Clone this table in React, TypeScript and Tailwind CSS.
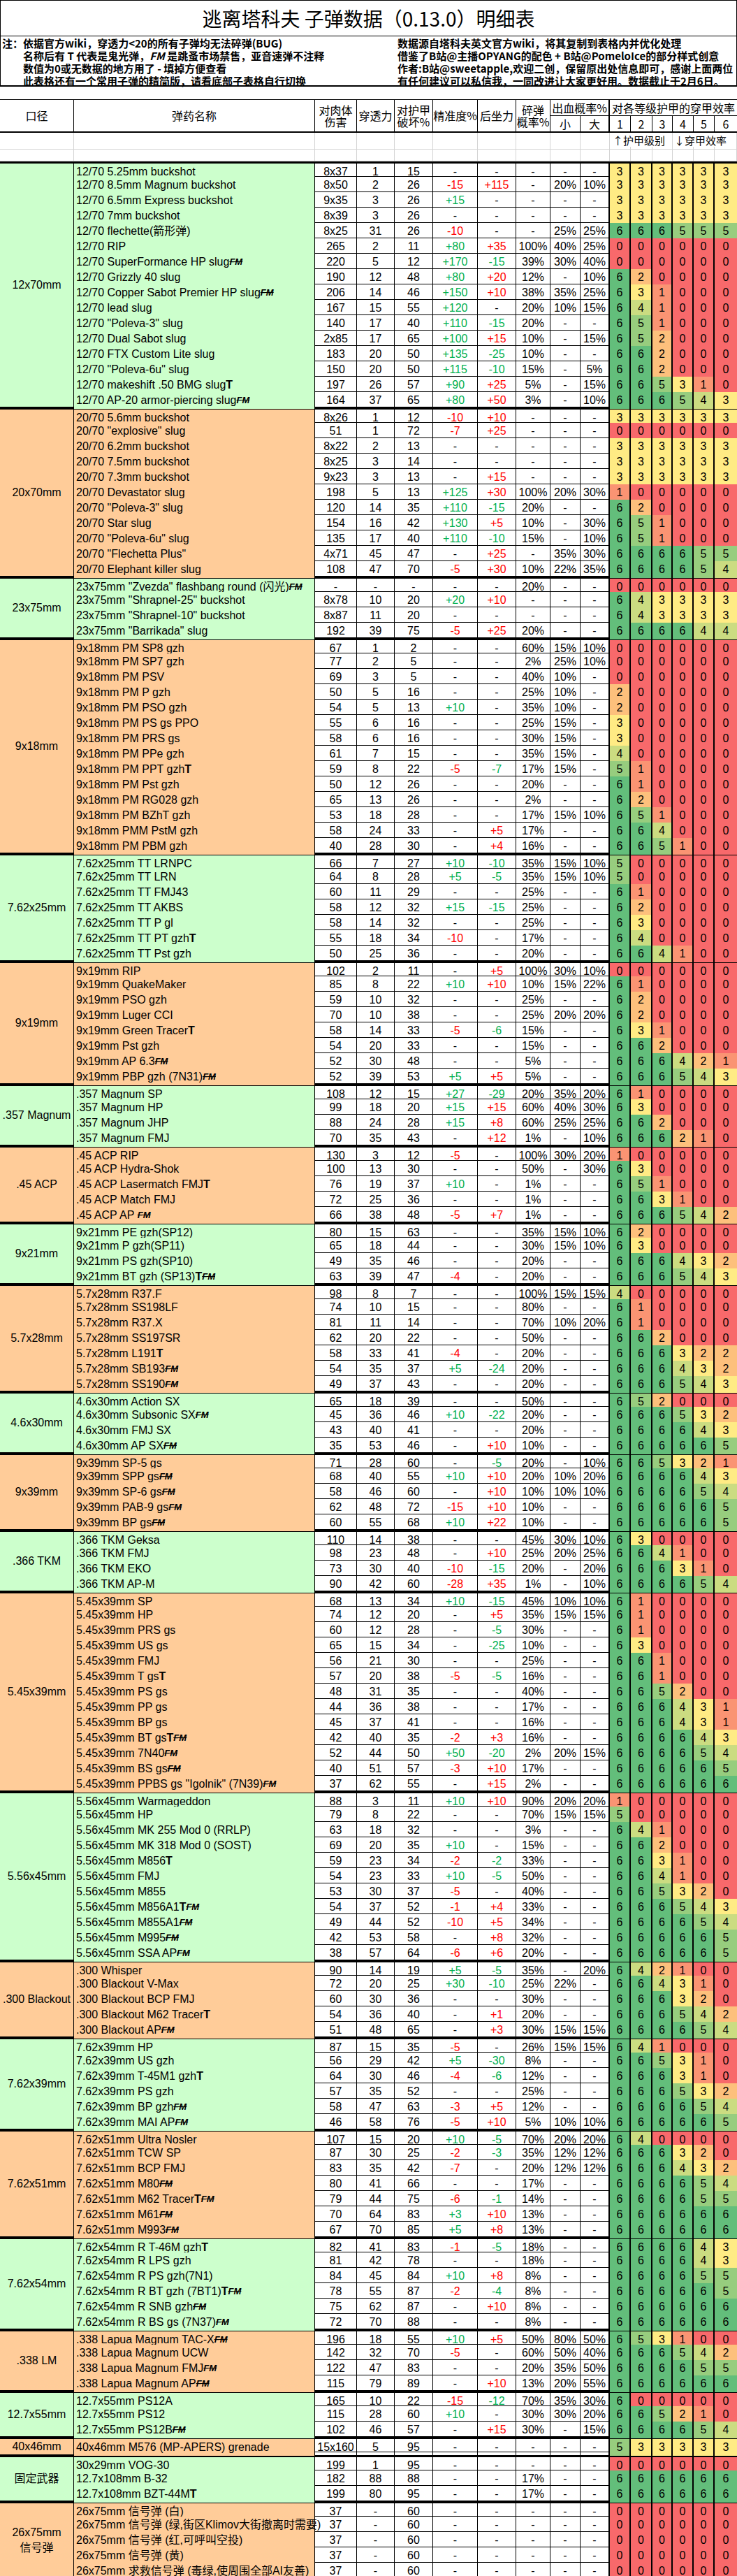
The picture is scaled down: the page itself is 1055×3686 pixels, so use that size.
import React from 'react';

type Group = { cal: string[]; tone: 'g' | 'o'; rows: string[] };

const ROW_COLS =
	'grid grid-cols-[345px_60px_54px_55px_64px_55px_49px_43px_42px_30px_31px_29px_30px_30px_32px]';
const ALL_COLS =
	'grid grid-cols-[106px_345px_60px_54px_55px_64px_55px_49px_43px_42px_30px_31px_29px_30px_30px_32px]';

const TONE = { g: 'bg-[#CCFFCC]', o: 'bg-[#FFCC99]' };

// 0..6 on Excel's red-yellow-green colour scale
const PEN: Record<string, string> = {
	'0': 'bg-[#F8696B]',
	'1': 'bg-[#FA9473]',
	'2': 'bg-[#FDC07C]',
	'3': 'bg-[#FFEB84]',
	'4': 'bg-[#CBDC81]',
	'5': 'bg-[#97CD7E]',
	'6': 'bg-[#63BE7B]'
};

// name|damage|pen|armor%|accuracy|recoil|frag|bleed small|bleed large|armor class 1-6
const groups: Group[] = [
	{
		cal: ['12x70mm'],
		tone: 'g',
		rows: [
			'12/70 5.25mm buckshot|8x37|1|15|-|-|-|-|-|333333',
			'12/70 8.5mm Magnum buckshot|8x50|2|26|-15|+115|-|20%|10%|333333',
			'12/70 6.5mm Express buckshot|9x35|3|26|+15|-|-|-|-|333333',
			'12/70 7mm buckshot|8x39|3|26|-|-|-|-|-|333333',
			'12/70 flechette(箭形弹)|8x25|31|26|-10|-|-|25%|25%|666555',
			'12/70 RIP|265|2|11|+80|+35|100%|40%|25%|000000',
			'12/70 SuperFormance HP slug {FM}|220|5|12|+170|-15|39%|30%|40%|000000',
			'12/70 Grizzly 40 slug|190|12|48|+80|+20|12%|-|10%|620000',
			'12/70 Copper Sabot Premier HP slug {FM}|206|14|46|+150|+10|38%|35%|25%|631000',
			'12/70 lead slug|167|15|55|+120|-|20%|10%|15%|641000',
			'12/70 "Poleva-3" slug|140|17|40|+110|-15|20%|-|-|651000',
			'12/70 Dual Sabot slug|2x85|17|65|+100|+15|10%|-|15%|652000',
			'12/70 FTX Custom Lite slug|183|20|50|+135|-25|10%|-|-|662000',
			'12/70 "Poleva-6u" slug|150|20|50|+115|-10|15%|-|5%|662000',
			'12/70 makeshift .50 BMG slug {T}|197|26|57|+90|+25|5%|-|15%|665310',
			'12/70 AP-20 armor-piercing slug {FM}|164|37|65|+80|+50|3%|-|10%|666543'
		]
	},
	{
		cal: ['20x70mm'],
		tone: 'o',
		rows: [
			'20/70 5.6mm buckshot|8x26|1|12|-10|+10|-|-|-|333333',
			'20/70 "explosive" slug|51|1|72|-7|+25|-|-|-|000000',
			'20/70 6.2mm buckshot|8x22|2|13|-|-|-|-|-|333333',
			'20/70 7.5mm buckshot|8x25|3|14|-|-|-|-|-|333333',
			'20/70 7.3mm buckshot|9x23|3|13|-|+15|-|-|-|333333',
			'20/70 Devastator slug|198|5|13|+125|+30|100%|20%|30%|100000',
			'20/70 "Poleva-3" slug|120|14|35|+110|-15|20%|-|-|620000',
			'20/70 Star slug|154|16|42|+130|+5|10%|-|30%|651000',
			'20/70 "Poleva-6u" slug|135|17|40|+110|-10|15%|-|10%|651000',
			'20/70 "Flechetta Plus"|4x71|45|47|-|+25|-|35%|30%|666655',
			'20/70 Elephant killer slug|108|47|70|-5|+30|10%|22%|35%|666654'
		]
	},
	{
		cal: ['23x75mm'],
		tone: 'g',
		rows: [
			'23x75mm "Zvezda" flashbang round (闪光){FM}|-|-|-|-|-|20%|-|-|000000',
			'23x75mm "Shrapnel-25" buckshot|8x78|10|20|+20|+10|-|-|-|643333',
			'23x75mm "Shrapnel-10" buckshot|8x87|11|20|-|-|-|-|-|643333',
			'23x75mm "Barrikada" slug|192|39|75|-5|+25|20%|-|-|666644'
		]
	},
	{
		cal: ['9x18mm'],
		tone: 'o',
		rows: [
			'9x18mm PM SP8 gzh|67|1|2|-|-|60%|15%|10%|000000',
			'9x18mm PM SP7 gzh|77|2|5|-|-|2%|25%|10%|000000',
			'9x18mm PM PSV|69|3|5|-|-|40%|10%|-|000000',
			'9x18mm PM P gzh|50|5|16|-|-|25%|10%|-|200000',
			'9x18mm PM PSO gzh|54|5|13|+10|-|35%|10%|-|200000',
			'9x18mm PM PS gs PPO|55|6|16|-|-|25%|15%|-|300000',
			'9x18mm PM PRS gs|58|6|16|-|-|30%|15%|-|300000',
			'9x18mm PM PPe gzh|61|7|15|-|-|35%|15%|-|400000',
			'9x18mm PM PPT gzh {T}|59|8|22|-5|-7|17%|15%|-|510000',
			'9x18mm PM Pst gzh|50|12|26|-|-|20%|-|-|610000',
			'9x18mm PM RG028 gzh|65|13|26|-|-|2%|-|-|620000',
			'9x18mm PM BZhT gzh|53|18|28|-|-|17%|15%|10%|651000',
			'9x18mm PMM PstM gzh|58|24|33|-|+5|17%|-|-|664000',
			'9x18mm PM PBM gzh|40|28|30|-|+4|16%|-|-|665100'
		]
	},
	{
		cal: ['7.62x25mm'],
		tone: 'g',
		rows: [
			'7.62x25mm TT LRNPC|66|7|27|+10|-10|35%|15%|10%|500000',
			'7.62x25mm TT LRN|64|8|28|+5|-5|35%|15%|10%|500000',
			'7.62x25mm TT FMJ43|60|11|29|-|-|25%|-|-|610000',
			'7.62x25mm TT AKBS|58|12|32|+15|-15|25%|-|-|620000',
			'7.62x25mm TT P gl|58|14|32|-|-|25%|-|-|630000',
			'7.62x25mm TT PT gzh {T}|55|18|34|-10|-|17%|-|-|640000',
			'7.62x25mm TT Pst gzh|50|25|36|-|-|20%|-|-|664100'
		]
	},
	{
		cal: ['9x19mm'],
		tone: 'o',
		rows: [
			'9x19mm RIP|102|2|11|-|+5|100%|30%|10%|000000',
			'9x19mm QuakeMaker|85|8|22|+10|+10|10%|15%|22%|610000',
			'9x19mm PSO gzh|59|10|32|-|-|25%|-|-|620000',
			'9x19mm Luger CCI|70|10|38|-|-|25%|20%|20%|620000',
			'9x19mm Green Tracer {T}|58|14|33|-5|-6|15%|-|-|631000',
			'9x19mm Pst gzh|54|20|33|-|-|15%|-|-|662000',
			'9x19mm AP 6.3 {FM}|52|30|48|-|-|5%|-|-|666421',
			'9x19mm PBP gzh (7N31){FM}|52|39|53|+5|+5|5%|-|-|666543'
		]
	},
	{
		cal: ['.357 Magnum'],
		tone: 'g',
		rows: [
			'.357 Magnum SP|108|12|15|+27|-29|20%|35%|20%|610000',
			'.357 Magnum HP|99|18|20|+15|+15|60%|40%|30%|630000',
			'.357 Magnum JHP|88|24|28|+15|+8|60%|25%|25%|662000',
			'.357 Magnum FMJ|70|35|43|-|+12|1%|-|10%|666210'
		]
	},
	{
		cal: ['.45 ACP'],
		tone: 'o',
		rows: [
			'.45 ACP RIP|130|3|12|-5|-|100%|30%|20%|100000',
			'.45 ACP Hydra-Shok|100|13|30|-|-|50%|-|30%|630000',
			'.45 ACP Lasermatch FMJ {T}|76|19|37|+10|-|1%|-|-|651000',
			'.45 ACP Match FMJ|72|25|36|-|-|1%|-|-|663100',
			'.45 ACP AP\u00a0 {FM}|66|38|48|-5|+7|1%|-|-|666542'
		]
	},
	{
		cal: ['9x21mm'],
		tone: 'g',
		rows: [
			'9x21mm PE gzh(SP12)|80|15|63|-|-|35%|15%|10%|620000',
			'9x21mm P gzh(SP11)|65|18|44|-|-|30%|15%|10%|630000',
			'9x21mm PS gzh(SP10)|49|35|46|-|-|20%|-|-|666432',
			'9x21mm BT gzh (SP13){T} {FM}|63|39|47|-4|-|20%|-|-|666543'
		]
	},
	{
		cal: ['5.7x28mm'],
		tone: 'o',
		rows: [
			'5.7x28mm R37.F|98|8|7|-|-|100%|15%|15%|400000',
			'5.7x28mm SS198LF|74|10|15|-|-|80%|-|-|610000',
			'5.7x28mm R37.X|81|11|14|-|-|70%|10%|20%|610000',
			'5.7x28mm SS197SR|62|20|22|-|-|50%|-|-|662000',
			'5.7x28mm L191 {T}|58|33|41|-4|-|20%|-|-|666322',
			'5.7x28mm SB193 {FM}|54|35|37|+5|-24|20%|-|-|666432',
			'5.7x28mm SS190 {FM}|49|37|43|-|-|20%|-|-|666543'
		]
	},
	{
		cal: ['4.6x30mm'],
		tone: 'g',
		rows: [
			'4.6x30mm Action SX|65|18|39|-|-|50%|-|-|652000',
			'4.6x30mm Subsonic SX {FM}|45|36|46|+10|-22|20%|-|-|666532',
			'4.6x30mm FMJ SX|43|40|41|-|-|20%|-|-|666643',
			'4.6x30mm AP SX {FM}|35|53|46|-|+10|10%|-|-|666665'
		]
	},
	{
		cal: ['9x39mm'],
		tone: 'o',
		rows: [
			'9x39mm SP-5 gs|71|28|60|-|-5|20%|-|10%|665321',
			'9x39mm SPP gs {FM}|68|40|55|+10|+10|20%|10%|20%|666643',
			'9x39mm SP-6 gs {FM}|58|46|60|-|+10|10%|10%|10%|666654',
			'9x39mm PAB-9 gs {FM}|62|48|72|-15|+10|10%|-|-|666665',
			'9x39mm BP gs {FM}|60|55|68|+10|+22|10%|-|-|666665'
		]
	},
	{
		cal: ['.366 TKM'],
		tone: 'g',
		rows: [
			'.366 TKM Geksa|110|14|38|-|-|45%|30%|10%|630000',
			'.366 TKM FMJ|98|23|48|-|+10|25%|20%|25%|664100',
			'.366 TKM EKO|73|30|40|-10|-15|20%|-|20%|666310',
			'.366 TKM AP-M|90|42|60|-28|+35|1%|-|10%|666654'
		]
	},
	{
		cal: ['5.45x39mm'],
		tone: 'o',
		rows: [
			'5.45x39mm SP|68|13|34|+10|-15|45%|10%|10%|610000',
			'5.45x39mm HP|74|12|20|-|+5|35%|15%|15%|610000',
			'5.45x39mm PRS gs|60|12|28|-|-5|30%|-|-|610000',
			'5.45x39mm US gs|65|15|34|-|-25|10%|-|-|630000',
			'5.45x39mm FMJ|56|21|30|-|-|25%|-|-|661000',
			'5.45x39mm T gs {T}|57|20|38|-5|-5|16%|-|-|661000',
			'5.45x39mm PS gs|48|31|35|-|-|40%|-|-|665200',
			'5.45x39mm PP gs|44|36|38|-|-|17%|-|-|666431',
			'5.45x39mm BP gs|45|37|41|-|-|16%|-|-|666431',
			'5.45x39mm BT gs {T} {FM}|42|40|35|-2|+3|16%|-|-|666643',
			'5.45x39mm 7N40 {FM}|52|44|50|+50|-20|2%|20%|15%|666654',
			'5.45x39mm BS gs {FM}|40|51|57|-3|+10|17%|-|-|666665',
			'5.45x39mm PPBS gs "Igolnik" (7N39){FM}|37|62|55|-|+15|2%|-|-|666666'
		]
	},
	{
		cal: ['5.56x45mm'],
		tone: 'g',
		rows: [
			'5.56x45mm Warmageddon|88|3|11|+10|+10|90%|20%|20%|100000',
			'5.56x45mm HP|79|8|22|-|-|70%|15%|15%|500000',
			'5.56x45mm MK 255 Mod 0 (RRLP)|63|18|32|-|-|3%|-|-|641000',
			'5.56x45mm MK 318 Mod 0 (SOST)|69|20|35|+10|-|15%|-|-|662000',
			'5.56x45mm M856 {T}|59|23|34|-2|-2|33%|-|-|663100',
			'5.56x45mm FMJ|54|23|33|+10|-5|50%|-|-|664100',
			'5.56x45mm M855|53|30|37|-5|-|40%|-|-|665320',
			'5.56x45mm M856A1 {T} {FM}|54|37|52|-1|+4|33%|-|-|666543',
			'5.56x45mm M855A1 {FM}|49|44|52|-10|+5|34%|-|-|666654',
			'5.56x45mm M995 {FM}|42|53|58|-|+8|32%|-|-|666665',
			'5.56x45mm SSA AP {FM}|38|57|64|-6|+6|20%|-|-|666665'
		]
	},
	{
		cal: ['.300 Blackout'],
		tone: 'o',
		rows: [
			'.300 Whisper|90|14|19|+5|-5|35%|-|20%|642100',
			'.300 Blackout V-Max|72|20|25|+30|-10|25%|22%|-|664310',
			'.300 Blackout BCP FMJ|60|30|36|-|-|30%|-|-|666320',
			'.300 Blackout M62 Tracer {T}|54|36|40|-|+1|20%|-|-|666542',
			'.300 Blackout AP {FM}|51|48|65|-|+3|30%|15%|15%|666654'
		]
	},
	{
		cal: ['7.62x39mm'],
		tone: 'g',
		rows: [
			'7.62x39mm HP|87|15|35|-5|-|26%|15%|15%|641000',
			'7.62x39mm US gzh|56|29|42|+5|-30|8%|-|-|665310',
			'7.62x39mm T-45M1 gzh {T}|64|30|46|-4|-6|12%|-|-|666310',
			'7.62x39mm PS gzh|57|35|52|-|-|25%|-|-|666532',
			'7.62x39mm BP gzh {FM}|58|47|63|-3|+5|12%|-|-|666654',
			'7.62x39mm MAI AP {FM}|46|58|76|-5|+10|5%|10%|10%|666665'
		]
	},
	{
		cal: ['7.62x51mm'],
		tone: 'o',
		rows: [
			'7.62x51mm Ultra Nosler|107|15|20|+10|-5|70%|20%|20%|640000',
			'7.62x51mm TCW SP|87|30|25|-2|-3|35%|12%|12%|666320',
			'7.62x51mm BCP FMJ|83|35|42|-7|-|20%|12%|12%|666432',
			'7.62x51mm M80 {FM}|80|41|66|-|-|17%|-|-|666654',
			'7.62x51mm M62 Tracer {T} {FM}|79|44|75|-6|-1|14%|-|-|666655',
			'7.62x51mm M61 {FM}|70|64|83|+3|+10|13%|-|-|666666',
			'7.62x51mm M993 {FM}|67|70|85|+5|+8|13%|-|-|666666'
		]
	},
	{
		cal: ['7.62x54mm'],
		tone: 'g',
		rows: [
			'7.62x54mm R T-46M gzh {T}|82|41|83|-1|-5|18%|-|-|666643',
			'7.62x54mm R LPS gzh|81|42|78|-|-|18%|-|-|666643',
			'7.62x54mm R PS gzh(7N1)|84|45|84|+10|+8|8%|-|-|666655',
			'7.62x54mm R BT gzh (7BT1){T} {FM}|78|55|87|-2|-4|8%|-|-|666665',
			'7.62x54mm R SNB gzh {FM}|75|62|87|-|+10|8%|-|-|666666',
			'7.62x54mm R BS gs (7N37){FM}|72|70|88|-|-|8%|-|-|666666'
		]
	},
	{
		cal: ['.338 LM'],
		tone: 'o',
		rows: [
			'.338 Lapua Magnum TAC-X {FM}|196|18|55|+10|+5|50%|80%|50%|653100',
			'.338 Lapua Magnum UCW|142|32|70|-5|-|60%|50%|40%|666542',
			'.338 Lapua Magnum FMJ {FM}|122|47|83|-|-|20%|35%|50%|666655',
			'.338 Lapua Magnum AP {FM}|115|79|89|-|+10|13%|20%|55%|666666'
		]
	},
	{
		cal: ['12.7x55mm'],
		tone: 'g',
		rows: [
			'12.7x55mm PS12A|165|10|22|-15|-12|70%|35%|30%|600000',
			'12.7x55mm PS12|115|28|60|+10|-|30%|30%|20%|665210',
			'12.7x55mm PS12B {FM}|102|46|57|-|+15|30%|-|15%|666654'
		]
	},
	{
		cal: ['40x46mm'],
		tone: 'o',
		rows: ['40x46mm M576 (MP-APERS) grenade|15x160|5|95|-|-|-|-|-|533333']
	},
	{
		cal: ['固定武器'],
		tone: 'g',
		rows: [
			'30x29mm VOG-30|199|1|95|-|-|-|-|-|000000',
			'12.7x108mm B-32|182|88|88|-|-|17%|-|-|666666',
			'12.7x108mm BZT-44M {T}|199|80|95|-|-|17%|-|-|666666'
		]
	},
	{
		cal: ['26x75mm', '信号弹'],
		tone: 'o',
		rows: [
			'26x75mm 信号弹 (白)|37|-|60|-|-|-|-|-|000000',
			'26x75mm 信号弹 (绿,街区Klimov大街撤离时需要)|37|-|60|-|-|-|-|-|000000',
			'26x75mm 信号弹 (红,可呼叫空投)|37|-|60|-|-|-|-|-|000000',
			'26x75mm 信号弹 (黄)|37|-|60|-|-|-|-|-|000000',
			'26x75mm 求救信号弹 (毒绿,使周围全部AI友善)|37|-|60|-|-|-|-|-|000000'
		]
	}
];

const FM = () => <span className="font-bold italic line-through text-[13px]">FM</span>;

const Name: React.FC<{ text: string }> = ({ text }) => (
	<>
		{text.split(/(\{FM\}|\{T\})/).map((part, i) => {
			if (part === '{FM}') return <FM key={i} />;
			if (part === '{T}') return <span key={i} className="font-bold">T</span>;
			return <span key={i}>{part}</span>;
		})}
	</>
);

// accuracy: + is good (green); recoil: - is good (green)
const signColor = (v: string, plusGood: boolean) => {
	if (v.length < 2) return '';
	const good = v.startsWith('+') === plusGood;
	return good ? 'text-[#00B050]' : 'text-[#FF0000]';
};

const cell = 'border-r border-black flex items-center justify-center';

const Row: React.FC<{ line: string; tone: string; first: boolean }> = ({ line, tone, first }) => {
	const [name, dmg, pen, armor, acc, rec, frag, small, large, p] = line.split('|');
	return (
		<div className={`${ROW_COLS} ${first ? 'h-[19px]' : 'h-[22px]'} border-b border-black`}>
			<div className={`${tone} border-r border-black pl-[3px] flex items-center whitespace-nowrap`}>
				<Name text={name} />
			</div>
			<div className={cell}>{dmg}</div>
			<div className={cell}>{pen}</div>
			<div className={cell}>{armor}</div>
			<div className={`${cell} ${signColor(acc, true)}`}>{acc}</div>
			<div className={`${cell} ${signColor(rec, false)}`}>{rec}</div>
			<div className={cell}>{frag}</div>
			<div className={cell}>{small}</div>
			<div className="border-r-2 border-black flex items-center justify-center">{large}</div>
			{p.split('').map((d, i) => (
				<div
					key={i}
					className={`${PEN[d]} ${i < 5 ? 'border-r-2 border-black' : ''} flex items-center justify-center`}
				>
					{d}
				</div>
			))}
		</div>
	);
};

const Header: React.FC = () => (
	<div
		className={`${ALL_COLS} grid-rows-[23px_22px] h-[48px] border-t border-b-2 border-black text-[16px] leading-[17px] font-['Noto_Sans_CJK_SC',sans-serif]`}
	>
		<div className="row-span-2 border-r border-black flex items-center justify-center">口径</div>
		<div className="row-span-2 border-r border-black flex items-center justify-center">弹药名称</div>
		<div className="row-span-2 border-r border-black flex items-center justify-center text-center">
			对肉体
			<br />
			伤害
		</div>
		<div className="row-span-2 border-r border-black flex items-center justify-center">穿透力</div>
		<div className="row-span-2 border-r border-black flex items-center justify-center text-center">
			对护甲
			<br />
			破坏%
		</div>
		<div className="row-span-2 border-r border-black flex items-center justify-center">精准度%</div>
		<div className="row-span-2 border-r border-black flex items-center justify-center">后坐力</div>
		<div className="row-span-2 border-r border-black flex items-center justify-center text-center">
			碎弹
			<br />
			概率%
		</div>
		<div className="col-span-2 border-r-2 border-b border-black flex items-center justify-center">出血概率%</div>
		<div className="col-span-6 border-b border-black flex items-center justify-center whitespace-nowrap">
			对各等级护甲的穿甲效率
		</div>
		<div className="border-r border-black flex items-center justify-center">小</div>
		<div className="border-r-2 border-black flex items-center justify-center">大</div>
		{['1', '2', '3', '4', '5', '6'].map((n, i) => (
			<div key={n} className={`${i < 5 ? 'border-r border-black' : ''} flex items-center justify-center`}>
				{n}
			</div>
		))}
	</div>
);

const gridCell = 'border-r border-b border-[#D4D4D4]';

const App: React.FC = () => {
	return (
		<div className="w-[1055px] bg-white text-black font-['Liberation_Sans','Noto_Sans_CJK_SC',sans-serif] text-[16px]">
			<div className="h-[52px] border border-black flex items-center justify-center text-[28px] font-['Noto_Sans_CJK_SC',sans-serif]">
				逃离塔科夫 子弹数据（0.13.0）明细表
			</div>
			<div className="h-[72px] border-x border-b-2 border-black flex pt-[1px] text-[15px] leading-[18px] font-bold font-['Noto_Sans_CJK_SC',sans-serif] whitespace-nowrap">
				<div className="w-[568px] pl-[2px] flex flex-col">
					<div>注：依据官方wiki，穿透力&lt;20的所有子弹均无法碎弹(BUG)</div>
					<div className="pl-[30px]">
						名称后有 <span className="font-bold">T</span> 代表是鬼光弹，<span className="italic">FM</span>{' '}
						是跳蚤市场禁售，亚音速弹不注释
					</div>
					<div className="pl-[30px]">数值为0或无数据的地方用了 - 填掉方便查看</div>
					<div className="pl-[30px]">此表格还有一个常用子弹的精简版，请看底部子表格自行切换</div>
				</div>
				<div className="flex flex-col">
					<div>数据源自塔科夫英文官方wiki，将其复制到表格内并优化处理</div>
					<div>借鉴了B站@主播OPYANG的配色 + B站@PomeloIce的部分样式创意</div>
					<div>作者:B站@sweetapple,欢迎二创，保留原出处信息即可，感谢上面两位</div>
					<div>有任何建议可以私信我，一同改进让大家更好用。数据截止于2月6日。</div>
				</div>
			</div>
			<div className="h-[18px]" />
			<Header />
			<div className={`${ALL_COLS} h-[20px]`}>
				{Array.from({ length: 10 }).map((_, i) => (
					<div key={i} className={gridCell} />
				))}
				<div className={`col-span-3 ${gridCell} pl-[4px] flex items-center text-[15px] whitespace-nowrap font-['Noto_Sans_CJK_SC',sans-serif]`}>
					↑护甲级别
				</div>
				<div className={`col-span-3 ${gridCell} pl-[2px] flex items-center text-[15px] whitespace-nowrap font-['Noto_Sans_CJK_SC',sans-serif]`}>
					↓穿甲效率
				</div>
			</div>
			<div className={`${ALL_COLS} h-[21px]`}>
				{Array.from({ length: 16 }).map((_, i) => (
					<div key={i} className={gridCell} />
				))}
			</div>
			{groups.map((g) => (
				<div key={g.cal.join('')} className="flex border-t-[3px] border-black">
					<div
						className={`${TONE[g.tone]} w-[106px] shrink-0 border-r border-b border-black flex flex-col items-center justify-center text-center leading-[22px] whitespace-nowrap`}
					>
						{g.cal.map((c) => (
							<div key={c}>{c}</div>
						))}
					</div>
					<div className="w-[949px]">
						{g.rows.map((line, i) => (
							<Row key={i} line={line} tone={TONE[g.tone]} first={i === 0} />
						))}
					</div>
				</div>
			))}
		</div>
	);
};

export default App;
